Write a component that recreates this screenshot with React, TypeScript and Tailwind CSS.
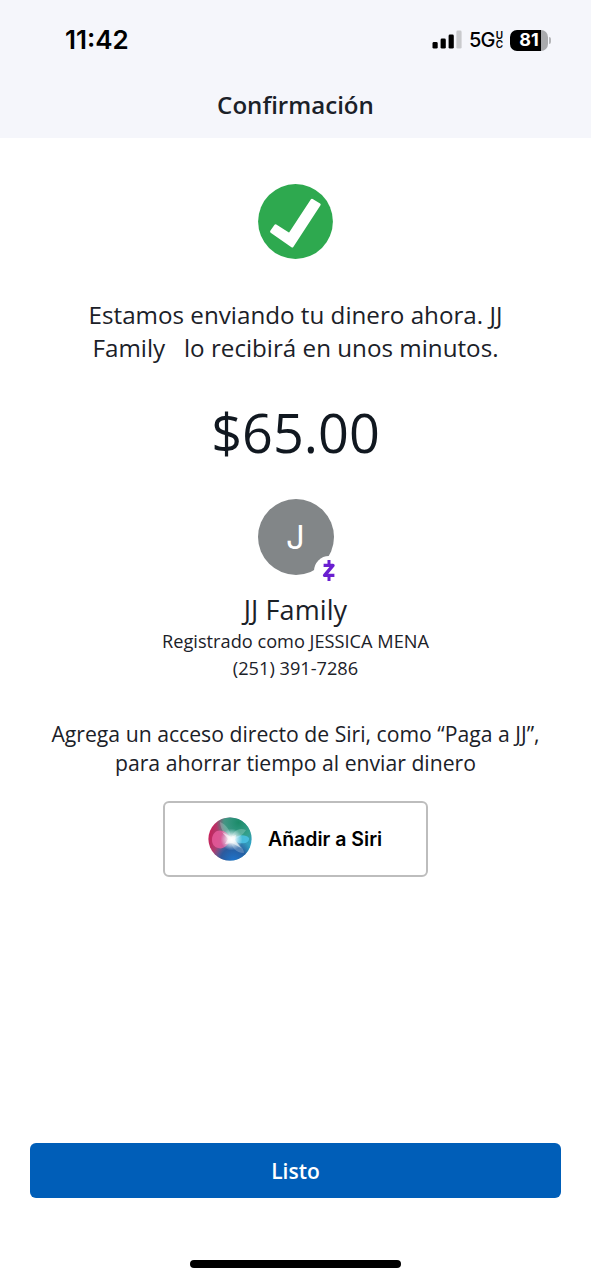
import React from "react";

const SignalBars: React.FC = () => (
  <svg width="30" height="20" viewBox="0 0 30 20">
    <rect x="0.5" y="12" width="5.2" height="6.6" rx="1.4" fill="#000" />
    <rect x="8.6" y="8.6" width="5.2" height="10" rx="1.4" fill="#000" />
    <rect x="16.6" y="4.6" width="5.2" height="14" rx="1.4" fill="#000" />
    <rect x="24.4" y="0.6" width="5.2" height="18" rx="1.4" fill="#c9cacd" />
  </svg>
);

const StatusBar: React.FC = () => (
  <div className="flex h-20 items-center justify-between pl-[65px] pr-[40px]">
    <span className="font-['Inter',sans-serif] text-[26px] leading-8 font-semibold text-black">
      11:42
    </span>
    <div className="flex items-center">
      <SignalBars />
      <span className="ml-[7px] font-['Inter',sans-serif] text-[20px] leading-6 font-medium tracking-[-0.8px] text-black">
        5G
      </span>
      <span className="ml-px flex flex-col font-['Inter',sans-serif] text-[10px] leading-[9px] font-semibold text-black">
        <span>U</span>
        <span>C</span>
      </span>
      <div className="ml-[7px] flex h-[21px] w-[38px] items-center justify-center rounded-[7px] bg-[linear-gradient(to_right,#000_81%,#a9aaad_81%)]">
        <span className="font-['Inter',sans-serif] text-[18px] leading-5 font-bold text-white">
          81
        </span>
      </div>
      <div className="ml-px h-[7px] w-[2px] rounded-r-full bg-[#b4b5b8]" />
    </div>
  </div>
);

const CheckIcon: React.FC = () => (
  <svg width="75" height="75" viewBox="0 0 75 75">
    <circle cx="37.5" cy="37.5" r="37.4" fill="#2ea94f" />
    <path
      d="M13.4 47.6 L17.6 41.6 L31.4 50.4 L54 16 L61.4 20.6 L34.2 62.2 Z"
      fill="#fff"
      stroke="#fff"
      strokeWidth="2.6"
      strokeLinejoin="round"
    />
  </svg>
);

const ZelleBadge: React.FC = () => (
  <svg width="32" height="32" viewBox="0 0 32 32">
    <circle cx="16" cy="17" r="15" fill="#fff" />
    <path
      d="M10.6 11.4 H20 L11.6 21.4 H21.4"
      fill="none"
      stroke="#6a1fd0"
      strokeWidth="3.4"
      strokeLinejoin="round"
    />
    <path d="M16 6 V11 M16 21.6 V27" stroke="#6a1fd0" strokeWidth="3" />
  </svg>
);

const SiriOrb: React.FC = () => (
  <svg width="44" height="44" viewBox="0 0 44 44">
    <defs>
      <linearGradient id="orb-base" x1="0" y1="0.4" x2="1" y2="0.6">
        <stop offset="0" stopColor="#c9205a" />
        <stop offset="0.3" stopColor="#a04a78" />
        <stop offset="0.6" stopColor="#3f7fa8" />
        <stop offset="1" stopColor="#2fa5c4" />
      </linearGradient>
      <radialGradient id="orb-green" cx="0.7" cy="0.12" r="0.52">
        <stop offset="0" stopColor="#1c8a68" />
        <stop offset="0.65" stopColor="#35a286" stopOpacity="0.85" />
        <stop offset="1" stopColor="#2f9a83" stopOpacity="0" />
      </radialGradient>
      <radialGradient id="orb-blue" cx="0.58" cy="1" r="0.5">
        <stop offset="0" stopColor="#1f74cc" />
        <stop offset="0.6" stopColor="#24599f" stopOpacity="0.9" />
        <stop offset="1" stopColor="#2a63a8" stopOpacity="0" />
      </radialGradient>
      <radialGradient id="orb-glow">
        <stop offset="0" stopColor="#fff" />
        <stop offset="0.3" stopColor="#fff" stopOpacity="0.85" />
        <stop offset="1" stopColor="#d8f0ff" stopOpacity="0" />
      </radialGradient>
    </defs>
    <circle cx="22" cy="22" r="21.6" fill="url(#orb-base)" />
    <circle cx="22" cy="22" r="21.6" fill="url(#orb-green)" />
    <circle cx="22" cy="22" r="21.6" fill="url(#orb-blue)" />
    <path
      d="M4 23 C4 15 10 12 15 14 C20 16 22 20 23 23 C20 28 15 33 10 31 C6 30 4 27 4 23 Z"
      fill="#ea5c9e"
      opacity="0.8"
    />
    <path
      d="M23 23 C29 17 38 17 41 21 C42 26 34 29 23 23 Z"
      fill="#4fc8f0"
      opacity="0.75"
    />
    <path
      d="M23 23 C15 17 12 10 12 5 C19 8 23 14 23 23 Z M23 23 C24 14 31 10 38 13 C35 18 30 22 23 23 Z M23 23 C30 25 36 31 36 36 C28 36 23 30 23 23 Z"
      fill="#fff"
      opacity="0.22"
    />
    <circle cx="23.5" cy="22.5" r="11" fill="url(#orb-glow)" />
    <path
      d="M14 15 L23 20 L28 18 L27 23 L33 31 L24 26 L17 27 L20 22 Z"
      fill="#fff"
      opacity="0.55"
    />
  </svg>
);

const App: React.FC = () => {
  return (
    <div className="flex h-[1280px] w-[591px] flex-col overflow-hidden bg-white font-['Open_Sans',sans-serif] text-[#1b2128]">
      <header className="h-[138px] bg-[#f5f6fb]">
        <StatusBar />
        <h1 className="pt-[8px] text-center text-[24.1px] leading-[34px] font-semibold">
          Confirmación
        </h1>
      </header>

      <main className="flex flex-1 flex-col items-center pt-[46px] whitespace-nowrap">
        <CheckIcon />

        {/* Transfer status */}
        <p className="mt-[39px] text-center text-[24.2px] leading-[33px]">
          Estamos enviando tu dinero ahora. JJ
          <br />
          Family{"\u00a0\u00a0 "}lo recibirá en unos minutos.
        </p>
        <p className="mt-[32px] text-[54px] leading-[72px] text-[#111820]">
          $65.00
        </p>

        {/* Recipient */}
        <div className="relative mt-[31px] flex size-[76px] items-center justify-center rounded-full bg-[#828688]">
          <span className="font-['Inter',sans-serif] text-[33px] leading-10 text-white">
            J
          </span>
          <div className="absolute top-[55px] left-[55px]">
            <ZelleBadge />
          </div>
        </div>
        <h2 className="mt-[18px] text-[27px] leading-[34px] tracking-[0.1px]">
          JJ Family
        </h2>
        <p className="mt-px text-[18.2px] leading-[26px]">
          Registrado como JESSICA MENA
        </p>
        <p className="mt-px text-[18.2px] leading-[26px]">(251) 391-7286</p>

        <p className="mt-[38px] text-center text-[21.2px] leading-[29px]">
          Agrega un acceso directo de Siri, como “Paga a JJ”,
          <br />
          para ahorrar tiempo al enviar dinero
        </p>
        <button className="mt-[24px] flex h-[76px] w-[265px] items-center rounded-[6px] border-2 border-[#bdbdbd] pl-[43px]">
          <SiriOrb />
          <span className="ml-[16px] font-['Inter',sans-serif] text-[19.5px] leading-6 font-semibold text-black">
            Añadir a Siri
          </span>
        </button>
      </main>

      <footer className="flex flex-col items-center">
        <button className="h-[55px] w-[531px] rounded-[6px] bg-[#005eb8] pt-[2px] text-[21px] leading-[29px] font-semibold text-white">
          Listo
        </button>
        <div className="mt-[62px] mb-[12px] h-[8px] w-[211px] rounded-full bg-black" />
      </footer>
    </div>
  );
};

export default App;
